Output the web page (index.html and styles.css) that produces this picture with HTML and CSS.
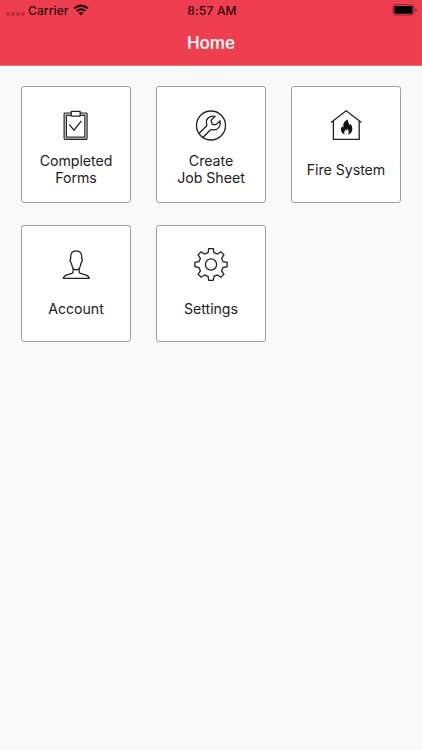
FILE: index.html
```
<!DOCTYPE html>
<html lang="en">
<head>
  <meta charset="UTF-8" />
  <meta name="viewport" content="width=device-width, initial-scale=1.0"/>
  <title>Home</title>
  <link rel="stylesheet" href="styles.css">
</head>
<body>

<header class="header">
  <div class="status-bar">
    <div class="status-left">
      <div class="signal"><i></i><i></i><i></i><i></i></div>
      <span class="carrier">Carrier</span>
      <svg class="wifi" viewBox="0 0 16 12">
        <path d="M1.2 4.5 Q8 -1.4 14.8 4.5" fill="none" stroke="#1d0507" stroke-width="2.1"/>
        <path d="M3.7 7.1 Q8 3.3 12.3 7.1" fill="none" stroke="#1d0507" stroke-width="1.9"/>
        <path d="M5.5 8.9 Q8 6.9 10.5 8.9 L8 11.4 Z" fill="#1d0507"/>
      </svg>
    </div>
    <span class="time">8:57 AM</span>
    <svg class="battery" viewBox="0 0 26 12">
      <rect x="0.9" y="0.7" width="21" height="10.4" rx="2.6" fill="none" stroke="#8f2630" stroke-width="1"/>
      <rect x="2.3" y="2.1" width="18.2" height="7.6" rx="1.2" fill="#000"/>
      <path d="M23.2 4 Q24.8 4.6 24.8 5.9 T23.2 7.8 Z" fill="#8f2630"/>
    </svg>
  </div>
  <h1 class="title">Home</h1>
</header>

<main class="menu">
  <a class="card">
    <svg class="icon" viewBox="0 0 42 44">
      <rect class="board" x="9.1" y="11" width="23" height="26.4" rx="0.8"/>
      <rect class="paper" x="11.4" y="13.3" width="18.4" height="21.8"/>
      <rect class="clip" x="16.2" y="9.4" width="9" height="4.8" rx="0.6"/>
      <path d="M14.3 22.7 L19 28.2 L26.4 18.8"/>
    </svg>
    <span class="label">Completed<br>Forms</span>
  </a>
  <a class="card">
    <svg class="icon" viewBox="0 0 42 44">
      <circle cx="21" cy="23.5" r="14.5"/>
      <path d="M9.2 31.3 L16.5 24 Q17.4 22.9 16.5 21.4 C15.7 17.2 19.5 13 25 14.3 L21.6 17.8 Q20.9 18.6 21.3 19.5 L22 21.7 Q22.3 22.5 23.2 22.5 L25.5 22.6 Q26.3 22.6 26.9 21.9 L30 19 C31.3 23.3 28.5 28.4 23.2 27.9 Q21.1 27.2 20 28.3 L12.6 35.7"/>
    </svg>
    <span class="label">Create<br>Job Sheet</span>
  </a>
  <a class="card">
    <svg class="icon" viewBox="0 0 42 44">
      <path d="M6 20.4 L21.2 8.8 L36.4 20.4 M8.4 18.8 V37.4 H34.2 V18.8"/>
      <path class="flame" d="M22.9 17.6 C22.4 20.2 24.2 21 24.5 23.3 Q25.4 22.8 25.2 21.4 C28.6 25.4 28.1 31 22.9 32.7 C24.7 30.2 23.1 28.5 22.6 26.6 Q22.2 28.2 21.1 28.7 Q21 27.6 20.4 27.1 C20.4 28.8 18.2 30.3 19.8 32.6 C15.7 31.1 14.9 27 17.3 24.1 Q17.7 25.3 18.6 25.5 C17.5 21.9 19.6 18.7 22.9 17.6 Z"/>
    </svg>
    <span class="label">Fire System</span>
  </a>
  <a class="card">
    <svg class="icon" viewBox="0 0 42 44">
      <path d="M18.1 27.4 V31.2 Q18 32 17 32.3 L12 33.8 Q8.6 34.9 8.3 37.3 H34.2 Q33.8 34.9 30.5 33.8 L25.4 32.3 Q24.3 32 24.2 31.2 V27.4"/>
      <path d="M21.2 9.8 C17.3 9.8 15.4 12.2 15.7 17.5 Q14.8 18.4 15.3 20.2 Q15.6 21.6 16.4 22 Q16.9 25.6 18.1 27.4 Q21.2 30.2 24.3 27.4 Q25.5 25.6 26 22 Q26.8 21.6 27.1 20.2 Q27.6 18.4 26.7 17.5 C27 12.2 25.1 9.8 21.2 9.8 Z"/>
    </svg>
    <span class="label">Account</span>
  </a>
  <a class="card">
    <svg class="icon" viewBox="0 0 42 44">
      <path d="M18.8 7.6 H23.2 L24 11.7 L27.4 13.1 L30.9 10.8 L33.9 13.8 L31.6 17.3 L33 20.7 L37.1 21.3 V25.7 L33 26.5 L31.6 29.9 L33.9 33.2 L30.9 36.2 L27.4 33.9 L24 35.3 L23.2 39.4 H18.8 L18 35.3 L14.6 33.9 L11.1 36.2 L8.1 33.2 L10.4 29.9 L9 26.5 L4.9 25.7 V21.3 L9 20.7 L10.4 17.3 L8.1 13.8 L11.1 10.8 L14.6 13.1 L18 11.7 Z"/>
      <circle cx="21" cy="23.5" r="5.6"/>
    </svg>
    <span class="label">Settings</span>
  </a>
</main>

</body>
</html>
```
FILE: styles.css
```
* {
  margin: 0; padding: 0; box-sizing: border-box;
}

body {
  font-family: Inter, 'Liberation Sans', sans-serif;
  background: #f9f9f9;
  min-height: 100vh;
  color: #222;
}

.header {
  height: 66px;
  background: #ef3e4f;
  border-bottom: 1px solid #df7884;
}

.status-bar {
  display: grid;
  grid-template-columns: 1fr auto 1fr;
  align-items: center;
  height: 20px;
  padding: 0 4px 0 6px;
  font-size: 12px;
  font-weight: 500;
  color: #2b080c;
}

.status-left {
  display: flex;
  align-items: center;
}

.signal {
  display: flex;
  gap: 1px;
  margin: 7px 3px 0 0;
}

.signal i {
  width: 4px;
  height: 4px;
  border-radius: 50%;
  background: #b92f3c;
}

.carrier {
  letter-spacing: 0.1px;
}

.wifi {
  width: 16px;
  height: 12px;
  margin-left: 4px;
}

.time {
  letter-spacing: 0.2px;
}

.battery {
  width: 26px;
  height: 12px;
  justify-self: end;
}

.title {
  font-size: 17px;
  font-weight: 600;
  line-height: 47px;
  letter-spacing: -0.1px;
  text-align: center;
  color: #fff0f1;
}

.menu {
  display: grid;
  grid-template-columns: repeat(3, 110px);
  justify-content: space-between;
  row-gap: 22px;
  padding: 20px 21px;
}

.card {
  height: 117px;
  padding-top: 15px;
  background: #fff;
  border: 1px solid #a0a0a0;
  border-radius: 3px;
  text-align: center;
}

.icon {
  display: block;
  width: 42px;
  height: 44px;
  margin: 0 auto;
  fill: none;
  stroke: #222;
  stroke-width: 1.3;
}

.icon .board {
  fill: #ccc;
  stroke-width: 1.1;
}

.icon .paper {
  fill: #fff;
  stroke-width: 1.1;
}

.icon .clip {
  fill: #fff;
}

.icon .flame {
  fill: #111;
  stroke: none;
}

.label {
  display: flex;
  align-items: center;
  justify-content: center;
  height: 46px;
  font-size: 14.2px;
  line-height: 17px;
  letter-spacing: -0.05px;
}
```
